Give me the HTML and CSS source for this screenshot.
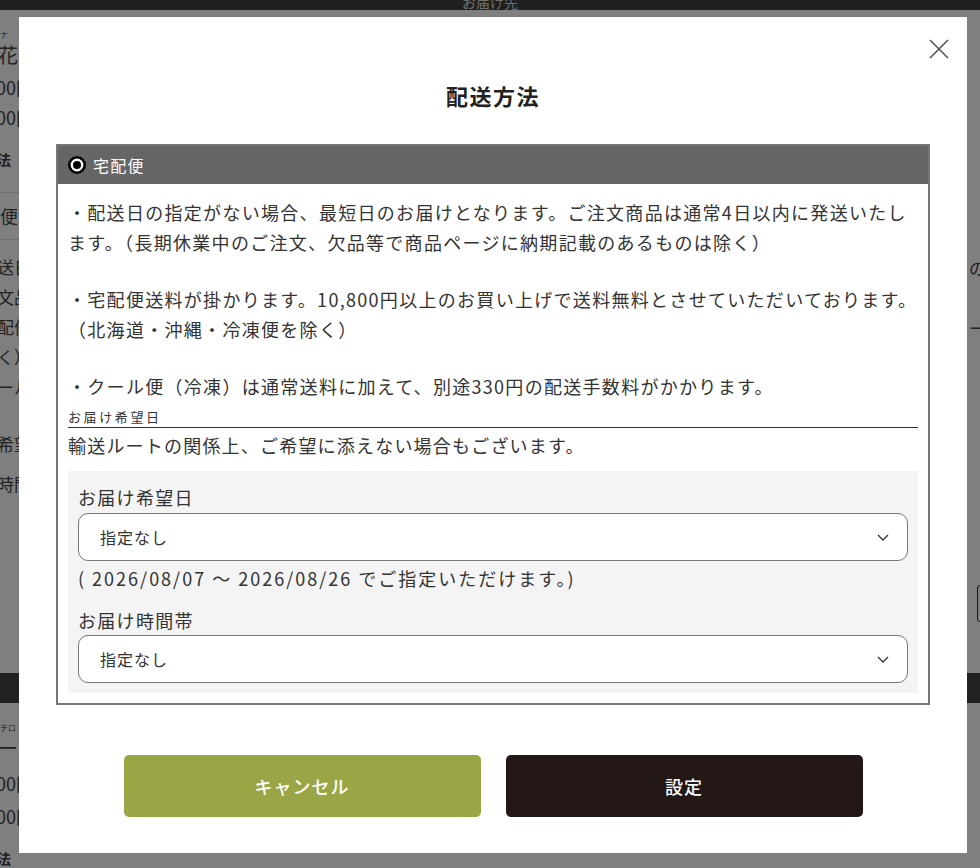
FILE: index.html
```html
<!DOCTYPE html>
<html lang="ja">
<head>
    <meta charset="utf-8">
    <title>配送方法</title>
    <link rel="stylesheet" href="styles.css">
</head>
<body>
    <div class="page">
        <header class="page-top"><span>お届け先</span></header>

        <div class="page-main">
            <div class="side side-left">
                <div class="bg-kana">ハナ</div>
                <div class="bg-name">生花アレンジ</div>
                <div class="bg-price">1,100円</div>
                <div class="bg-price">3,300円</div>
                <div class="bg-head">方法</div>
                <div class="bg-section">宅配便</div>
                <div class="bg-text">
                    <div>配送日の</div>
                    <div>注文品</div>
                    <div>宅配便</div>
                    <div>除く）</div>
                    <div>クール</div>
                </div>
                <div class="bg-label">お希望</div>
                <div class="bg-label">お時間</div>
            </div>
            <div class="side side-right">
                <div class="bg-text">
                    <div>のこ</div>
                    <div>&nbsp;</div>
                    <div>ール</div>
                </div>
                <div class="bg-box"></div>
            </div>
        </div>

        <div class="page-band"></div>

        <div class="page-lower">
            <div class="side side-left">
                <div class="bg-kana">プチロ</div>
                <div class="bg-name">ブーケ</div>
                <div class="bg-price">1,100円</div>
                <div class="bg-price">2,200円</div>
                <div class="bg-head">方法</div>
            </div>
        </div>
    </div>

    <div class="overlay">
        <div class="modal">
            <button class="modal-close" type="button" aria-label="閉じる">
                <svg width="20" height="20" viewBox="0 0 20 20">
                    <path d="M1 1 L19 19 M19 1 L1 19" stroke="#555" stroke-width="1.6" fill="none"/>
                </svg>
            </button>

            <h2 class="modal-title">配送方法</h2>

            <div class="method">
                <div class="method-head">
                    <svg width="18" height="18" viewBox="0 0 18 18">
                        <circle cx="9" cy="9" r="7.7" fill="#fff" stroke="#000" stroke-width="2.6"/>
                        <circle cx="9" cy="9" r="4" fill="#000"/>
                    </svg>
                    <span>宅配便</span>
                </div>

                <div class="method-body">
                    <div class="note">
                        <p>・配送日の指定がない場合、最短日のお届けとなります。ご注文商品は通常4日以内に発送いたします。（長期休業中のご注文、欠品等で商品ページに納期記載のあるものは除く）</p>
                        <p>・宅配便送料が掛かります。10,800円以上のお買い上げで送料無料とさせていただいております。（北海道・沖縄・冷凍便を除く）</p>
                        <p>・クール便（冷凍）は通常送料に加えて、別途330円の配送手数料がかかります。</p>
                    </div>

                    <div class="date-label">お届け希望日</div>
                    <div class="date-caution">輸送ルートの関係上、ご希望に添えない場合もございます。</div>

                    <div class="panel">
                        <div class="field-label">お届け希望日</div>
                        <div class="select">
                            <span>指定なし</span>
                            <svg width="12" height="7" viewBox="0 0 12 7">
                                <polyline points="1,1 6,6 11,1" fill="none" stroke="#333" stroke-width="1.3"/>
                            </svg>
                        </div>
                        <div class="field-note">( 2026/08/07 ～ 2026/08/26 でご指定いただけます。)</div>

                        <div class="field-label field-label-second">お届け時間帯</div>
                        <div class="select select-second">
                            <span>指定なし</span>
                            <svg width="12" height="7" viewBox="0 0 12 7">
                                <polyline points="1,1 6,6 11,1" fill="none" stroke="#333" stroke-width="1.3"/>
                            </svg>
                        </div>
                    </div>
                </div>
            </div>

            <div class="actions">
                <button class="btn btn-cancel" type="button">キャンセル</button>
                <button class="btn btn-submit" type="button">設定</button>
            </div>
        </div>
    </div>
</body>
</html>
```

FILE: styles.css
```css
* {
    box-sizing: border-box;
}

body {
    margin: 0;
    font-family: "Noto Sans CJK JP", "Noto Sans", sans-serif;
    color: #333;
    background: #fff;
}

/* page behind the modal */
.page {
    height: 868px;
    overflow: hidden;
    background: #fff;
    color: #444;
}

.page-top {
    height: 10px;
    background: #3e3e3e;
    color: #ddd;
    text-align: center;
    font-size: 14px;
    line-height: 4px;
    overflow: hidden;
}

.page-main {
    height: 663px;
    display: flex;
    justify-content: space-between;
}

.side {
    white-space: nowrap;
    overflow: hidden;
}

.side-left {
    width: 60px;
    margin-left: -24px;
}

.side-right {
    width: 40px;
    margin-right: -27px;
}

.bg-kana {
    margin-top: 19px;
    font-size: 8px;
    line-height: 12px;
    padding-left: 16px;
}

.bg-name {
    margin-top: 2px;
    font-size: 20px;
    line-height: 24px;
    margin-left: 2px;
}

.bg-price {
    margin-top: 10px;
    font-size: 18px;
    line-height: 20px;
    margin-left: -5px;
}

.bg-head {
    margin-top: 22px;
    font-size: 14px;
    font-weight: 700;
    line-height: 20px;
    margin-left: 7px;
}

.bg-section {
    margin-top: 23px;
    height: 48px;
    line-height: 46px;
    font-size: 18px;
    border-top: 1px solid #ddd;
    border-bottom: 1px solid #ddd;
    margin-left: -12px;
}

.bg-text {
    margin-top: 12px;
    font-size: 17px;
    line-height: 30px;
}

.side-left .bg-text {
    margin-left: 4px;
}

.side-right .bg-text {
    margin-top: 243px;
    margin-left: 2px;
}

.bg-label {
    margin-top: 32px;
    font-size: 17px;
    line-height: 20px;
    margin-left: 4px;
}

.bg-label + .bg-label {
    margin-top: 20px;
}

.bg-box {
    margin-top: 242px;
    margin-left: 10px;
    height: 37px;
    width: 80px;
    border: 1px solid #333;
    border-radius: 3px;
}

.page-band {
    height: 30px;
    background: #444;
}

.page-lower .bg-kana {
    margin-top: 19px;
}

.page-lower .bg-price {
    margin-top: 13px;
}

/* modal */
.overlay {
    position: fixed;
    top: 0;
    left: 0;
    right: 0;
    bottom: 0;
    background: rgba(0, 0, 0, 0.5);
}

.modal {
    position: relative;
    margin: 17px 0 0 19px;
    width: 948px;
    height: 836px;
    padding: 62px 37px 36px;
    background: #fff;
}

.modal-close {
    position: absolute;
    top: 22px;
    right: 18px;
    width: 20px;
    height: 20px;
    padding: 0;
    border: none;
    background: none;
    cursor: pointer;
}

.modal-close svg {
    display: block;
}

.modal-title {
    margin: 0 0 33px;
    text-align: center;
    font-size: 22px;
    font-weight: 700;
    line-height: 32px;
    letter-spacing: 1.5px;
    color: #222;
}

.method {
    border: 2px solid #777;
}

.method-head {
    display: flex;
    align-items: center;
    gap: 7px;
    height: 38px;
    padding-left: 10px;
    background: #666;
    color: #fff;
    font-size: 16px;
    letter-spacing: 1.3px;
}

.method-head svg {
    display: block;
}

.method-body {
    padding: 13px 10px 10px;
}

.note p {
    margin: 0 0 27px;
    font-size: 18px;
    line-height: 30px;
    letter-spacing: 1.3px;
}

.note p:last-child {
    margin-bottom: 0;
}

.date-label {
    margin-top: 6px;
    font-size: 13px;
    line-height: 20px;
    letter-spacing: 0.2em;
    border-bottom: 1px solid #333;
}

.date-caution {
    margin-top: 2px;
    font-size: 18px;
    line-height: 30px;
    letter-spacing: 1.2px;
}

.panel {
    margin-top: 11px;
    padding: 14px 10px 10px;
    background: #f4f4f4;
}

.field-label {
    font-size: 18px;
    line-height: 24px;
    letter-spacing: 1.3px;
}

.field-label-second {
    margin-top: 18px;
}

.select {
    display: flex;
    align-items: center;
    justify-content: space-between;
    margin-top: 4px;
    height: 48px;
    padding: 0 18px 0 21px;
    border: 1px solid #777;
    border-radius: 10px;
    background: #fff;
    font-size: 16px;
    letter-spacing: 0.06em;
}

.select svg {
    display: block;
}

.select-second {
    margin-top: 3px;
}

.field-note {
    margin-top: 5px;
    font-size: 18px;
    line-height: 24px;
    letter-spacing: 2px;
}

.actions {
    display: flex;
    justify-content: center;
    gap: 25px;
    margin-top: 50px;
}

.btn {
    width: 357px;
    height: 62px;
    border: none;
    border-radius: 5px;
    color: #fff;
    font-family: inherit;
    font-size: 18px;
    font-weight: 500;
    letter-spacing: 1px;
    cursor: pointer;
}

.btn-cancel {
    background: #9aa646;
}

.btn-submit {
    background: #231815;
}
```
